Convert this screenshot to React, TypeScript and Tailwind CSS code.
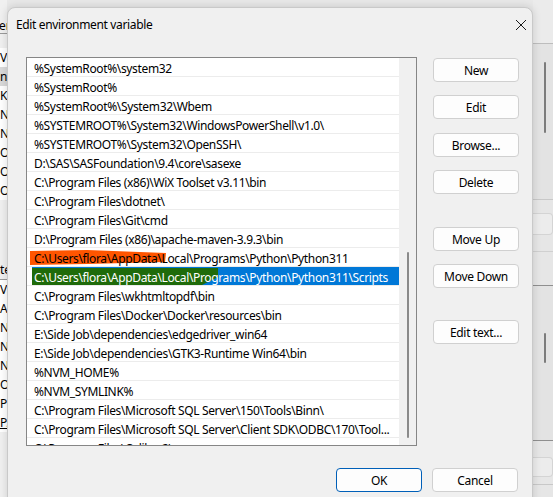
import React from "react";

const paths = [
  "%SystemRoot%\\system32",
  "%SystemRoot%",
  "%SystemRoot%\\System32\\Wbem",
  "%SYSTEMROOT%\\System32\\WindowsPowerShell\\v1.0\\",
  "%SYSTEMROOT%\\System32\\OpenSSH\\",
  "D:\\SAS\\SASFoundation\\9.4\\core\\sasexe",
  "C:\\Program Files (x86)\\WiX Toolset v3.11\\bin",
  "C:\\Program Files\\dotnet\\",
  "C:\\Program Files\\Git\\cmd",
  "D:\\Program Files (x86)\\apache-maven-3.9.3\\bin",
  "C:\\Users\\flora\\AppData\\Local\\Programs\\Python\\Python311",
  "C:\\Users\\flora\\AppData\\Local\\Programs\\Python\\Python311\\Scripts",
  "C:\\Program Files\\wkhtmltopdf\\bin",
  "C:\\Program Files\\Docker\\Docker\\resources\\bin",
  "E:\\Side Job\\dependencies\\edgedriver_win64",
  "E:\\Side Job\\dependencies\\GTK3-Runtime Win64\\bin",
  "%NVM_HOME%",
  "%NVM_SYMLINK%",
  "C:\\Program Files\\Microsoft SQL Server\\150\\Tools\\Binn\\",
  "C:\\Program Files\\Microsoft SQL Server\\Client SDK\\ODBC\\170\\Tool...",
  "C:\\Program Files\\Calibre2\\",
];

const font = { fontFamily: '"Segoe UI", "Noto Sans", sans-serif' };

function Btn({ label, primary }: { label: string; primary?: boolean }) {
  return (
    <div
      className={`w-[86px] h-[24px] pt-[1px] flex items-center justify-center rounded-[4px] bg-[#fdfdfd] text-[12px] tracking-[-0.3px] text-black ${
        primary ? "border border-[#005fb8]" : "border border-[#d0d0d0]"
      }`}
    >
      {label}
    </div>
  );
}

function Row({ text, idx }: { text: string; idx: number }) {
  const selected = idx === 11;
  return (
    <div className="relative h-[19px] border-b border-[#ececec] flex">
      {idx === 10 && (
        <svg className="absolute left-0 top-0" width="200" height="19">
          <path d="M3,3 L60,2 L139,5 L138,14 L60,16 L3,17 Z" fill="#ff5500" />
        </svg>
      )}
      <div
        className={`relative ml-[5px] pl-[2px] flex-1 leading-[21px] whitespace-nowrap overflow-hidden text-[12px] tracking-[-0.35px] ${
          selected ? "bg-[#0078d7] text-white" : "text-black"
        }`}
      >
        {selected && (
          <svg className="absolute left-0 top-0" width="200" height="19">
            <path d="M0,1 L186,1 L186,10 L170,18 L0,18 Z" fill="#1f6b0a" />
          </svg>
        )}
        <span className="relative">{text}</span>
      </div>
    </div>
  );
}

function LeftStrip() {
  const top = ["Va", "nt", "KN", "NV", "NV", "ON", "Or", "Or"];
  const bottom = ["Va", "AI", "NU", "NV", "NV", "OS", "Pa", "PA"];
  return (
    <div className="w-[7px] h-full overflow-hidden flex flex-col text-[12px] text-black bg-[#f0f0f0]">
      <div className="h-[33px] flex items-end pb-[1px] leading-[12px] -ml-[1px]">er</div>
      <div className="h-px bg-[#9a9a9a]" />
      <div className="h-[14px]" />
      {top.map((t, i) => (
        <div key={i} className={`h-[19px] leading-[19px] ${i === 1 ? "bg-[#d9d9d9]" : "bg-white"}`}>
          {t}
        </div>
      ))}
      <div className="h-[60px]" />
      <div className="h-[19px] leading-[19px]">te</div>
      <div className="h-px bg-[#9a9a9a]" />
      {bottom.map((t, i) => (
        <div key={i} className={`h-[19px] leading-[19px] bg-white ${i === 7 ? "underline" : ""}`}>
          {t}
        </div>
      ))}
    </div>
  );
}

function RightStrip() {
  return (
    <div className="w-[20px] h-full flex flex-col bg-[#e6e6e6]">
      <div className="h-[43px] bg-[#ebebeb]" />
      <div className="h-px bg-[#bdbdbd]" />
      <div className="h-[155px] bg-[#e3e3e3] pl-[11px] pt-[18px]">
        <div className="w-[2px] h-[71px] bg-[#7c7c7c] rounded" />
      </div>
      <div className="h-px bg-[#c8c8c8]" />
      <div className="h-[13px]" />
      <div className="h-[22px] rounded-r-[4px] border border-l-0 border-[#d4d4d4] bg-[#ececec]" />
      <div className="h-[16px]" />
      <div className="h-px bg-[#d0d0d0]" />
      <div className="h-[33px]" />
      <div className="h-px bg-[#8f8f8f]" />
      <div className="h-[154px] bg-[#e3e3e3] pl-[11px] pt-[47px]">
        <div className="w-[2px] h-[30px] bg-[#7c7c7c] rounded" />
      </div>
      <div className="h-px bg-[#8f8f8f]" />
      <div className="h-[16px]" />
      <div className="h-[20px] rounded-r-[4px] border border-l-0 border-[#d4d4d4] bg-[#ececec]" />
      <div className="h-[7px]" />
      <div className="h-px bg-[#c8c8c8]" />
    </div>
  );
}

export default function App() {
  return (
    <div className="relative w-[553px] h-[497px] overflow-hidden bg-[#e8e8e8]" style={font}>
      <div className="flex h-full">
        <LeftStrip />
        <div className="flex-1" />
        <RightStrip />
      </div>

      <div className="absolute left-[7px] top-[7px] w-[526px] h-[510px] rounded-t-[8px] border border-[#c9c9c9] bg-[#f0f0f0] shadow-[0_0_8px_rgba(0,0,0,0.15)] flex flex-col">
        <div className="h-[32px] pt-[1px] flex items-center justify-between pl-[8px] pr-[4px] text-[12px] tracking-[-0.35px] text-black">
          <span>Edit environment variable</span>
          <svg width="14" height="14" viewBox="0 0 14 14">
            <path d="M2,2 L12,12 M12,2 L2,12" stroke="#1a1a1a" strokeWidth="1" />
          </svg>
        </div>

        <div className="flex pl-[18px] pt-[17px]">
          <div className="w-[391px] h-[389px] border border-[#868686] bg-white flex overflow-hidden">
            <div className="flex-1 flex flex-col overflow-hidden">
              {paths.map((p, i) => (
                <Row key={i} text={p} idx={i} />
              ))}
            </div>
            <div className="w-[17px] bg-[#f0f0f0] flex flex-col items-center pt-[194px]">
              <div className="w-[2px] h-[186px] bg-[#8a8a8a] rounded" />
            </div>
          </div>

          <div className="ml-[16px] mt-[1px] flex flex-col">
            <Btn label="New" />
            <div className="h-[13px]" />
            <Btn label="Edit" />
            <div className="h-[14px]" />
            <Btn label="Browse..." />
            <div className="h-[13px]" />
            <Btn label="Delete" />
            <div className="h-[33px]" />
            <Btn label="Move Up" />
            <div className="h-[13px]" />
            <Btn label="Move Down" />
            <div className="h-[32px]" />
            <Btn label="Edit text..." />
          </div>
        </div>

        <div className="flex justify-end gap-[10px] pr-[14px] pt-[22px]">
          <Btn label="OK" primary />
          <Btn label="Cancel" />
        </div>
      </div>
    </div>
  );
}
